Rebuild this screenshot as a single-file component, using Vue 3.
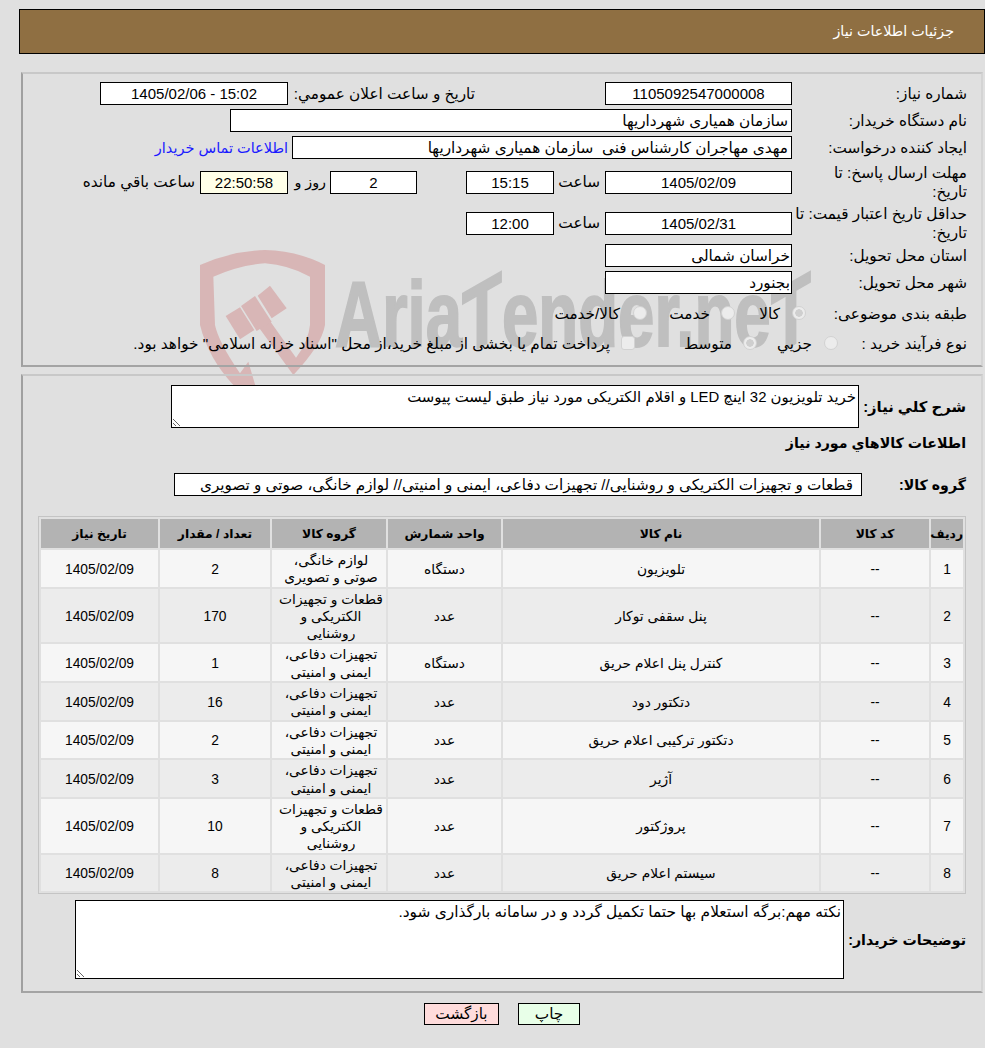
<script setup>
import { ref } from 'vue';

const kala = ref('kala');
const farayand = ref('motevaset');

const khanegi = 'لوازم خانگی، صوتی و تصویری';
const roshanayi = 'قطعات و تجهیزات الکتریکی و روشنایی';
const defaee = 'تجهیزات دفاعی، ایمنی و امنیتی';

// ردیف های جدول کالا
const rows = [
  { id: 1, name: 'تلویزیون', unit: 'دستگاه', group: khanegi, qty: 2 },
  { id: 2, name: 'پنل سقفی توکار', unit: 'عدد', group: roshanayi, qty: 170 },
  { id: 3, name: 'کنترل پنل اعلام حریق', unit: 'دستگاه', group: defaee, qty: 1 },
  { id: 4, name: 'دتکتور دود', unit: 'عدد', group: defaee, qty: 16 },
  { id: 5, name: 'دتکتور ترکیبی اعلام حریق', unit: 'عدد', group: defaee, qty: 2 },
  { id: 6, name: 'آژیر', unit: 'عدد', group: defaee, qty: 3 },
  { id: 7, name: 'پروژکتور', unit: 'عدد', group: roshanayi, qty: 10 },
  { id: 8, name: 'سیستم اعلام حریق', unit: 'عدد', group: defaee, qty: 8 }
];
</script>

<template>
  <div class="page" dir="rtl">
    <!-- واترمارک پشت فرم -->
    <div class="watermark" aria-hidden="true">
      <svg class="wm-shield" viewBox="0 0 450 435" width="150" height="145">
        <g fill="#d8b6b6">
          <path d="M30 60 Q125 18 225 15 Q325 18 405 60 L405 240 Q395 300 310 390 L207 248 L240 228 L318 338 Q355 290 360 240 L360 95 Q295 60 225 55 Q150 60 70 95 L75 240 Q85 290 150 385 L175 350 L200 435 L130 420 Q55 340 30 240 Z" />
          <path d="M107 213 L150 187 L193 255 L150 283 Z" />
          <path d="M153 183 L195 153 L245 230 L200 258 Z" />
          <path d="M203 152 L240 122 L290 190 L245 220 Z" />
        </g>
      </svg>
      <span class="wm-text">Aria<i>T</i>ender.ne<i>T</i></span>
    </div>

    <div class="content">
      <header class="top-bar">جزئیات اطلاعات نیاز</header>

      <section class="panel panel-info">
        <div class="row r-first">
          <label class="lbl">شماره نیاز:</label>
          <div class="field w-date num">1105092547000008</div>
          <label class="lbl lbl-announce">تاریخ و ساعت اعلان عمومي:</label>
          <div class="field w-announce num">15:02 - 1405/02/06</div>
        </div>
        <div class="row">
          <label class="lbl">نام دستگاه خریدار:</label>
          <div class="field w-buyer start">سازمان همیاری شهرداریها</div>
        </div>
        <div class="row">
          <label class="lbl">ایجاد کننده درخواست:</label>
          <div class="field w-creator start">مهدی مهاجران کارشناس فنی&nbsp; سازمان همیاری شهرداریها</div>
          <a class="contact" href="#">اطلاعات تماس خریدار</a>
        </div>
        <div class="row row-tall r-deadline">
          <label class="lbl">مهلت ارسال پاسخ: تا<br />تاریخ:</label>
          <div class="field w-date num">1405/02/09</div>
          <span class="txt txt-hour">ساعت</span>
          <div class="field w-time num">15:15</div>
          <div class="field w-days num">2</div>
          <span class="txt txt-day">روز و</span>
          <div class="field w-left num remain">22:50:58</div>
          <span class="txt txt-left">ساعت باقي مانده</span>
        </div>
        <div class="row row-tall r-valid">
          <label class="lbl">حداقل تاریخ اعتبار قیمت: تا تاریخ:</label>
          <div class="field w-date num">1405/02/31</div>
          <span class="txt txt-hour">ساعت</span>
          <div class="field w-time num">12:00</div>
        </div>
        <div class="row r-province">
          <label class="lbl">استان محل تحویل:</label>
          <div class="field w-date start tight">خراسان شمالی</div>
        </div>
        <div class="row">
          <label class="lbl">شهر محل تحویل:</label>
          <div class="field w-date start tight">بجنورد</div>
        </div>
        <div class="row r-subject">
          <label class="lbl lbl-subject">طبقه بندی موضوعی:</label>
          <div class="choices">
            <input v-model="kala" class="radio" type="radio" value="kala" disabled />
            <span class="txt t-kala">کالا</span>
            <input v-model="kala" class="radio r-khedmat" type="radio" value="khedmat" disabled />
            <span class="txt t-khedmat">خدمت</span>
            <input v-model="kala" class="radio r-both" type="radio" value="both" disabled />
            <span class="txt t-both">کالا/خدمت</span>
          </div>
        </div>
        <div class="row r-process">
          <label class="lbl lbl-process">نوع فرآیند خرید :</label>
          <div class="choices">
            <input v-model="farayand" class="radio" type="radio" value="jozi" disabled />
            <span class="txt t-jozi">جزيي</span>
            <input v-model="farayand" class="radio r-motevaset" type="radio" value="motevaset" disabled />
            <span class="txt t-motevaset">متوسط</span>
            <input class="check" type="checkbox" disabled />
            <span class="txt t-pay">پرداخت تمام یا بخشی از مبلغ خرید،از محل "اسناد خزانه اسلامی" خواهد بود.</span>
          </div>
        </div>
      </section>

      <section class="panel panel-items">
        <div class="row r-desc">
          <label class="lbl-b lbl-desc">شرح کلي نياز:</label>
          <textarea class="area area-desc" readonly>خرید تلویزیون 32 اینچ LED و اقلام الکتریکی مورد نیاز طبق لیست پیوست</textarea>
        </div>
        <h3 class="lbl-b items-title">اطلاعات کالاهاي مورد نياز</h3>
        <div class="row r-group">
          <label class="lbl-b lbl-group">گروه کالا:</label>
          <div class="field w-group start">قطعات و تجهیزات الکتریکی و روشنایی// تجهیزات دفاعی، ایمنی و امنیتی// لوازم خانگی، صوتی و تصویری</div>
        </div>

        <table class="items">
          <colgroup>
            <col class="c-row" /><col class="c-code" /><col class="c-name" /><col class="c-unit" />
            <col class="c-grp" /><col class="c-qty" /><col class="c-need" />
          </colgroup>
          <thead>
            <tr>
              <th>ردیف</th>
              <th>کد کالا</th>
              <th>نام کالا</th>
              <th>واحد شمارش</th>
              <th>گروه کالا</th>
              <th>تعداد / مقدار</th>
              <th>تاریخ نیاز</th>
            </tr>
          </thead>
          <tbody>
            <tr v-for="row in rows" :key="row.id">
              <td>{{ row.id }}</td>
              <td>--</td>
              <td>{{ row.name }}</td>
              <td>{{ row.unit }}</td>
              <td class="td-group">{{ row.group }}</td>
              <td>{{ row.qty }}</td>
              <td>1405/02/09</td>
            </tr>
          </tbody>
        </table>

        <div class="row r-notes">
          <label class="lbl-b lbl-notes">توضیحات خریدار:</label>
          <textarea class="area area-notes" readonly>نکته مهم:برگه استعلام بها حتما تکمیل گردد و در سامانه بارگذاری شود.</textarea>
        </div>
      </section>

      <div class="actions">
        <button class="btn btn-print" type="button">چاپ</button>
        <button class="btn btn-back" type="button">بازگشت</button>
      </div>
    </div>
  </div>
</template>

<style>
html, body {
  margin: 0;
  background: #e0e0e0;
}
</style>

<style scoped>
.page {
  position: relative;
  width: 985px;
  height: 1048px;
  overflow: hidden;
  background: #e0e0e0;
  color: #000;
  font-family: "Liberation Sans", "DejaVu Sans", sans-serif;
  font-size: 15.3px;
}

/* واترمارک */
.watermark {
  position: absolute;
  left: 0;
  top: 0;
  width: 985px;
  height: 400px;
}
.wm-shield {
  position: absolute;
  left: 190px;
  top: 245px;
}
.wm-text {
  position: absolute;
  left: 335px;
  top: 264px;
  direction: ltr;
  color: #bfbfbf;
  font-family: "Liberation Sans", sans-serif;
  font-size: 92px;
  line-height: 100px;
  font-weight: 700;
  white-space: nowrap;
  -webkit-text-stroke: 2px #bfbfbf;
  transform: scaleX(0.71);
  transform-origin: left top;
}
.wm-text i {
  display: inline-block;
  font-style: normal;
  transform: skewY(-22deg);
}

.content {
  position: relative;
  padding-top: 9px;
}

.top-bar {
  box-sizing: border-box;
  width: 966px;
  height: 45px;
  margin-inline-end: 19px;
  padding-right: 30px;
  background: #8f6f42;
  border: 1px solid #000;
  color: #fff;
  font-size: 14.3px;
  line-height: 43px;
}

.panel {
  box-sizing: border-box;
  width: 962px;
  margin-right: 2px;
  border: 2px solid;
  border-color: #c8c8c8 #d4d4d4 #a4a4a4 #a0a0a0;
}
.panel-info {
  height: 295px;
  margin-top: 18px;
  padding: 8px 14px 0 0;
}
.panel-items {
  height: 619px;
  margin-top: 7px;
  padding: 9px 15px 0 0;
}

.row {
  display: flex;
  align-items: center;
  height: 23px;
  margin-bottom: 4px;
}
.row-tall {
  height: 38px;
  margin-bottom: 0;
}
.r-deadline {
  margin-top: 4px;
}
.r-valid {
  margin-top: 3px;
}
.r-province {
  margin-top: 2px;
}
.r-subject {
  margin-top: 8px;
  margin-bottom: 7px;
}

.lbl {
  flex: none;
  width: 175px;
  line-height: 19px;
}
.lbl-subject {
  width: 161px;
}
.lbl-process {
  width: 129px;
}
.lbl-b {
  font-weight: 700;
  font-size: 14.2px;
}

.field {
  flex: none;
  box-sizing: border-box;
  height: 23px;
  background: #fff;
  border: 1px solid #000;
  line-height: 21px;
  text-align: center;
  white-space: nowrap;
  overflow: hidden;
}
.num {
  font-size: 15px;
}
.start {
  text-align: right;
  padding-right: 3px;
}
.tight {
  padding-right: 1px;
}
.remain {
  background: #ffffe8;
}
.w-date { width: 187px; }
.w-announce { width: 188px; }
.w-buyer { width: 562px; }
.w-creator { width: 500px; }
.w-time { width: 88px; }
.w-days { width: 87px; margin-right: 49px; }
.w-left { width: 88px; }
.w-group { width: 688px; padding-right: 8px; font-size: 15.2px; }

.lbl-announce {
  width: 187px;
  margin-right: 130px;
}
.contact {
  margin-right: 4px;
  color: #1a1aff;
  font-size: 14.5px;
  text-decoration: none;
  white-space: nowrap;
}
.txt {
  flex: none;
  white-space: nowrap;
}
.txt-hour {
  width: 46px;
  margin-right: 5px;
}
.txt-day {
  width: 38px;
  margin-right: 4px;
  font-size: 14.3px;
}
.txt-left {
  margin-right: 5px;
}

.choices {
  display: flex;
  align-items: center;
}
.radio,
.check {
  appearance: none;
  flex: none;
  box-sizing: border-box;
  width: 14px;
  height: 14px;
  margin: 0 0 2px;
  background: #ececec;
  border: 1px solid #d2d2d2;
}
.radio {
  border-radius: 50%;
}
.radio:checked {
  background: radial-gradient(circle, #cfcfcf 0 3.5px, #ececec 4px);
}
.check {
  border-radius: 3px;
  margin-right: 52px;
}
.t-kala { width: 22px; margin-right: 12px; }
.r-khedmat { margin-right: 23px; }
.t-khedmat { width: 40px; margin-right: 11px; }
.r-both { margin-right: 23px; }
.t-both { margin-right: 13px; }
.t-jozi { width: 34px; margin-right: 12px; }
.r-motevaset { margin-right: 21px; }
.t-motevaset { width: 45px; margin-right: 11px; }
.t-pay { margin-right: 11px; }

.area {
  flex: none;
  box-sizing: border-box;
  display: block;
  margin: 0;
  padding: 2px;
  background: #fff;
  border: 1px solid #000;
  border-radius: 0;
  color: #000;
  font: inherit;
  outline: none;
  resize: both;
}

.r-desc {
  height: 43px;
  margin-bottom: 0;
}
.lbl-desc {
  width: 107px;
  font-size: 14.8px;
}
.area-desc {
  width: 688px;
  height: 43px;
  font-size: 14.9px;
}
.items-title {
  margin: 6px 0 0;
  height: 18px;
  line-height: 18px;
}
.r-group {
  margin-top: 21px;
  margin-bottom: 0;
}
.lbl-group {
  width: 104px;
}

.items {
  box-sizing: border-box;
  table-layout: fixed;
  width: 928px;
  margin: 20px 0 0 0;
  background: #e0e0e0;
  border: 1px solid #c4c4c4;
  border-spacing: 2px;
  font-size: 13.8px;
}
.c-row { width: 32px; }
.c-code { width: 108px; }
.c-name { width: 316px; }
.c-unit { width: 113px; }
.c-grp { width: 114px; }
.c-qty { width: 110px; }
.c-need { width: 117px; }
.items th {
  height: 29px;
  padding: 0;
  background: #b3b3b3;
  font-size: 12.3px;
  font-weight: 700;
}
.items td {
  padding: 2px 5px 0;
  background: #f6f6f6;
  line-height: 17.3px;
  text-align: center;
}
.items td.td-group {
  padding-right: 3px;
  padding-left: 7px;
}
.items tbody tr:nth-child(even) td {
  background: #ececec;
}

.r-notes {
  height: 79px;
  margin-top: 6px;
}
.lbl-notes {
  width: 122px;
}
.area-notes {
  width: 769px;
  height: 79px;
  font-size: 15.4px;
}

.actions {
  display: flex;
  justify-content: center;
  gap: 19px;
  margin-top: 10px;
  padding-left: 19px;
  direction: ltr;
}
.btn {
  box-sizing: border-box;
  height: 22px;
  padding: 0;
  border: 1px solid #000;
  border-radius: 0;
  color: #000;
  font: inherit;
}
.btn-back {
  order: -1;
  width: 75px;
  background: #ffdcdc;
}
.btn-print {
  width: 62px;
  background: #e8ffe8;
}
</style>
